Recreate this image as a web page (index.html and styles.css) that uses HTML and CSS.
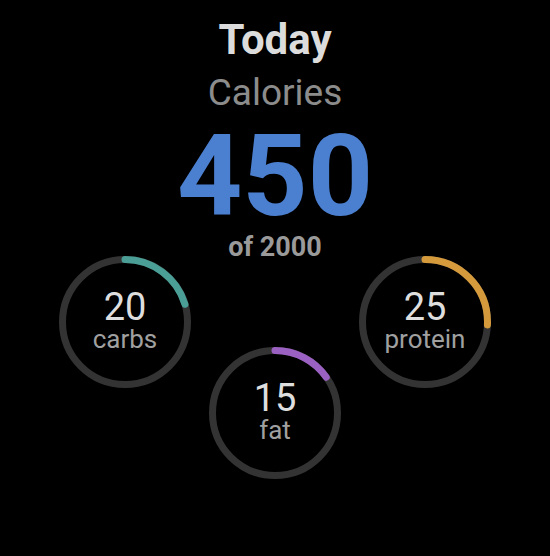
FILE: index.html
```html
<!DOCTYPE html>
<html>
<head>
<meta charset="utf-8">
<link rel="stylesheet" href="styles.css">
</head>
<body>
<main class="screen">
  <div class="title">Today</div>
  <div class="subtitle">Calories</div>
  <div class="total">450</div>
  <div class="goal">of 2000</div>
  <div class="rings">
    <div class="ring">
      <svg class="ring-svg" viewBox="0 0 132 132">
        <circle class="track" cx="66" cy="66" r="62.5"/>
        <circle class="arc carbs" cx="66" cy="66" r="62.5" stroke-dasharray="80 400"/>
      </svg>
      <div class="ring-text">
        <div class="ring-value">20</div>
        <div class="ring-label">carbs</div>
      </div>
    </div>
    <div class="ring">
      <svg class="ring-svg" viewBox="0 0 132 132">
        <circle class="track" cx="66" cy="66" r="62.5"/>
        <circle class="arc protein" cx="66" cy="66" r="62.5" stroke-dasharray="101 400"/>
      </svg>
      <div class="ring-text">
        <div class="ring-value">25</div>
        <div class="ring-label">protein</div>
      </div>
    </div>
  </div>
  <div class="ring ring-fat">
    <svg class="ring-svg" viewBox="0 0 132 132">
      <circle class="track" cx="66" cy="66" r="62.5"/>
      <circle class="arc fat" cx="66" cy="66" r="62.5" stroke-dasharray="60 400"/>
    </svg>
    <div class="ring-text">
      <div class="ring-value">15</div>
      <div class="ring-label">fat</div>
    </div>
  </div>
</main>
</body>
</html>
```
FILE: styles.css
```css
html, body {
  margin: 0;
  padding: 0;
  background: #000;
}
body {
  width: 550px;
  height: 556px;
  overflow: hidden;
  font-family: Roboto, "Noto Sans", sans-serif;
}
.screen {
  display: flex;
  flex-direction: column;
  align-items: center;
  padding-top: 19px;
  text-align: center;
}
.title {
  font-size: 42px;
  line-height: 42px;
  font-weight: 700;
  color: #dcdcdc;
}
.subtitle {
  margin-top: 13px;
  font-size: 37px;
  line-height: 37px;
  color: #8c8c8c;
}
.total {
  margin-top: 8px;
  font-size: 114px;
  line-height: 114px;
  font-weight: 700;
  color: #4b7fd0;
}
.goal {
  margin-top: 1px;
  font-size: 27px;
  line-height: 27px;
  font-weight: 700;
  color: #9a9a9a;
}
.rings {
  margin-top: -5px;
  width: 432px;
  display: flex;
  justify-content: space-between;
}
.ring {
  position: relative;
  width: 132px;
  height: 132px;
}
.ring-fat {
  margin-top: -41px;
}
.ring-svg {
  position: absolute;
  left: 0;
  top: 0;
  width: 132px;
  height: 132px;
  transform: rotate(-90deg);
}
.track {
  fill: none;
  stroke: #333;
  stroke-width: 7;
}
.arc {
  fill: none;
  stroke-width: 7;
  stroke-linecap: round;
}
.carbs { stroke: #4a9e96; }
.protein { stroke: #d49a3c; }
.fat { stroke: #9b61c2; }
.ring-text {
  position: relative;
  display: flex;
  flex-direction: column;
  align-items: center;
  padding-top: 32px;
}
.ring-value {
  font-size: 38px;
  line-height: 38px;
  font-weight: 400;
  color: #dedede;
}
.ring-label {
  font-size: 26px;
  line-height: 26px;
  color: #a0a0a0;
}
```
